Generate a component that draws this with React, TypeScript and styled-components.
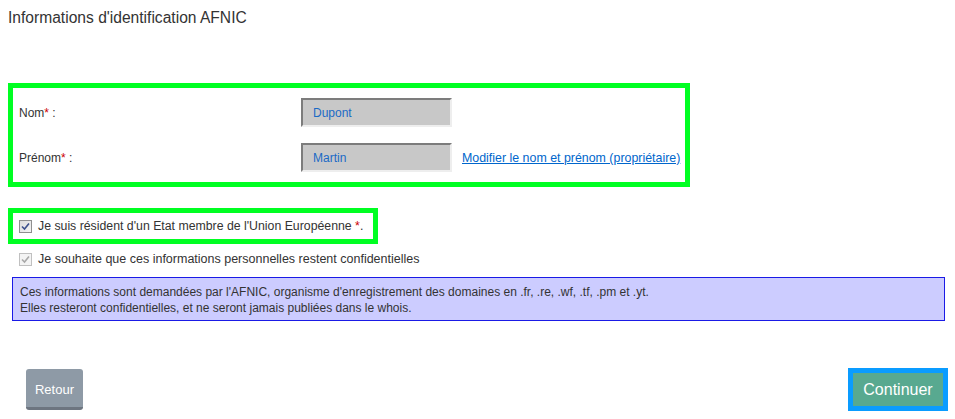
import React from "react";
import styled, { createGlobalStyle } from "styled-components";

const Global = createGlobalStyle`
  html, body { margin: 0; padding: 0; background: #ffffff; }
  body { font-family: "Liberation Sans", Arial, sans-serif; color: #333333; }
  * { box-sizing: border-box; }
`;

const Page = styled.div`
  width: 955px;
  height: 419px;
  padding: 0 7px 0 8px;
  display: flex;
  flex-direction: column;
`;

const Title = styled.h1`
  margin: 9px 0 0 0;
  font-size: 15.6px;
  line-height: 18px;
  font-weight: normal;
  color: #333333;
`;

const GreenBox = styled.div<{ $inline?: boolean }>`
  border: 5px solid #00ff22;
  display: ${(p) => (p.$inline ? "inline-flex" : "grid")};
  align-self: flex-start;
`;

const IdentityBox = styled(GreenBox)`
  margin-top: 56px;
  width: 682px;
  height: 104px;
  padding: 10px 0 0 6px;
  grid-template-columns: 282px 151px auto;
  grid-auto-rows: 29px;
  row-gap: 16px;
  align-items: center;
`;

const Label = styled.span`
  font-size: 12px;
  color: #333333;
`;

const Star = styled.span`
  color: #cc0000;
`;

const Field = styled.input`
  width: 151px;
  height: 29px;
  margin: 0;
  padding: 0 0 0 10px;
  background: #c8c8c8;
  border-top: 2px solid #7c7c7c;
  border-left: 2px solid #7c7c7c;
  border-bottom: 2px solid #eeeeee;
  border-right: 2px solid #eeeeee;
  font-family: "Liberation Sans", Arial, sans-serif;
  font-size: 12px;
  color: #1a6ac6;
  outline: none;
`;

const Link = styled.a`
  margin-left: 10px;
  font-size: 12.4px;
  color: #0066cc;
  text-decoration: underline;
  white-space: nowrap;
`;

const ResidentBox = styled(GreenBox)`
  margin-top: 21px;
  width: 370px;
  height: 36px;
  padding: 0 0 0 6px;
  align-items: center;
`;

const CheckRow = styled.label<{ $indent?: number; $size?: number }>`
  display: flex;
  align-items: center;
  gap: 6px;
  padding-left: ${(p) => p.$indent ?? 0}px;
  font-size: ${(p) => p.$size ?? 12.3}px;
  color: #333333;
  white-space: nowrap;
`;

const PlainRow = styled(CheckRow)`
  margin-top: 6px;
  height: 18px;
`;

const Box = styled.span<{ $disabled?: boolean }>`
  width: 13px;
  height: 13px;
  flex: none;
  display: flex;
  align-items: center;
  justify-content: center;
  border: 1px solid ${(p) => (p.$disabled ? "#c0c0c0" : "#8f8f8f")};
  background: ${(p) =>
    p.$disabled
      ? "#f4f4f4"
      : "linear-gradient(135deg, #dcdcdc 0%, #f4f4f4 100%)"};
`;

const Check: React.FC<{ disabled?: boolean }> = ({ disabled }) => (
  <Box $disabled={disabled}>
    <svg width="9" height="9" viewBox="0 0 9 9">
      <path
        d="M1 4.5 L3.5 7 L8 1.5"
        fill="none"
        stroke={disabled ? "#a8a8a8" : "#3d518c"}
        strokeWidth="1.6"
      />
    </svg>
  </Box>
);

const Info = styled.div`
  margin: 9px 3px 0 4px;
  border: 1px solid #1a1ae6;
  background: #ccccff;
  padding: 6px 7px 4px 7px;
  font-size: 12px;
  line-height: 16px;
  color: #333333;
`;

const Actions = styled.div`
  margin-top: 47px;
  display: flex;
  justify-content: space-between;
  align-items: flex-start;
`;

const BackButton = styled.button`
  margin: 1px 0 0 18px;
  width: 57px;
  height: 41px;
  border: none;
  border-bottom: 3px solid #6d7580;
  border-radius: 3px;
  background: #8e9aa6;
  color: #ffffff;
  font-family: "Liberation Sans", Arial, sans-serif;
  font-size: 13px;
  padding: 3px 0 0 0;
`;

const NextButton = styled.button`
  width: 100px;
  height: 43px;
  border: 5px solid #0a9cff;
  background: #58a990;
  color: #ffffff;
  font-family: "Liberation Sans", Arial, sans-serif;
  font-size: 16px;
  padding: 0;
`;

export default function App() {
  return (
    <>
      <Global />
      <Page>
        <Title>Informations d'identification AFNIC</Title>
        <IdentityBox>
          <Label>
            Nom<Star>*</Star> :
          </Label>
          <Field readOnly value="Dupont" />
          <span />
          <Label>
            Prénom<Star>*</Star> :
          </Label>
          <Field readOnly value="Martin" />
          <Link href="#">Modifier le nom et prénom (propriétaire)</Link>
        </IdentityBox>
        <ResidentBox $inline>
          <CheckRow>
            <Check />
            <span>
              Je suis résident d'un Etat membre de l'Union Européenne <Star>*</Star>.
            </span>
          </CheckRow>
        </ResidentBox>
        <PlainRow $indent={11} $size={12.5}>
          <Check disabled />
          <span>Je souhaite que ces informations personnelles restent confidentielles</span>
        </PlainRow>
        <Info>
          Ces informations sont demandées par l'AFNIC, organisme d'enregistrement des domaines en .fr, .re, .wf, .tf, .pm et .yt.
          <br />
          Elles resteront confidentielles, et ne seront jamais publiées dans le whois.
        </Info>
        <Actions>
          <BackButton>Retour</BackButton>
          <NextButton>Continuer</NextButton>
        </Actions>
      </Page>
    </>
  );
}
